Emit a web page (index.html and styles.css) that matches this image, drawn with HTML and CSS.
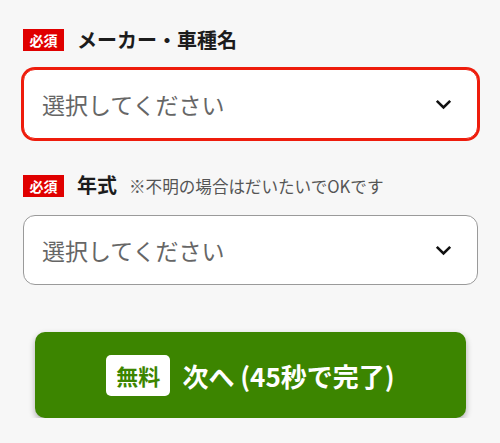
FILE: index.html
```html
<!DOCTYPE html>
<html lang="ja">
<head>
<meta charset="utf-8">
<link rel="stylesheet" href="styles.css">
</head>
<body>
<div class="form">
  <div class="field">
    <div class="field-label">
      <span class="req">必須</span>
      <span class="label-text">メーカー・車種名</span>
    </div>
    <div class="select is-error">
      <span class="placeholder">選択してください</span>
      <svg class="chevron" width="17" height="11" viewBox="0 0 17 11"><polyline points="1.8,1.8 8.5,8.5 15.2,1.8" fill="none" stroke="#111" stroke-width="2.6"/></svg>
    </div>
  </div>
  <div class="field field-second">
    <div class="field-label">
      <span class="req">必須</span>
      <span class="label-group"><span class="label-text">年式</span><span class="note">※不明の場合はだいたいでOKです</span></span>
    </div>
    <div class="select">
      <span class="placeholder">選択してください</span>
      <svg class="chevron" width="17" height="11" viewBox="0 0 17 11"><polyline points="1.8,1.8 8.5,8.5 15.2,1.8" fill="none" stroke="#111" stroke-width="2.6"/></svg>
    </div>
  </div>
  <button class="next-btn" type="button">
    <span class="free">無料</span>
    <span class="next-text">次へ (45秒で完了)</span>
  </button>
</div>
</body>
</html>
```

FILE: styles.css
```css
html, body {
  margin: 0;
  padding: 0;
  background: #f7f7f7;
}
body {
  font-family: "Noto Sans CJK JP", "Noto Sans", sans-serif;
  color: #222;
}
.form {
  padding: 29px 22px 0 23px;
  display: flex;
  flex-direction: column;
}
.field {
  display: flex;
  flex-direction: column;
  gap: 18px;
}
.field-second {
  margin-top: 36px;
}
.field-label {
  display: flex;
  align-items: center;
  gap: 13px;
  height: 22px;
}
.req {
  width: 41px;
  height: 22px;
  line-height: 22px;
  background: #e00000;
  color: #fff;
  font-size: 14px;
  font-weight: 700;
  text-align: center;
  flex: none;
}
.label-group {
  display: flex;
  align-items: baseline;
  gap: 12px;
}
.label-text {
  font-size: 20px;
  font-weight: 700;
  line-height: 22px;
  color: #1c1c1c;
}
.note {
  font-size: 16.6px;
  color: #555;
}
.select {
  box-sizing: border-box;
  height: 70px;
  border: 1px solid #9a9a9a;
  border-radius: 12px;
  background: #fff;
  display: flex;
  align-items: center;
  justify-content: space-between;
  padding: 0 25px 0 18px;
}
.select.is-error {
  border-color: #ee1c0c;
  box-shadow: 0 0 0 2px #ee1c0c;
}
.placeholder {
  font-size: 23px;
  color: #666;
}
.chevron {
  display: block;
}
.next-btn {
  margin: 47px 12px 0;
  height: 86px;
  border: none;
  border-radius: 10px;
  background: #3c8500;
  box-shadow: 0 3px 6px rgba(0, 0, 0, 0.3);
  display: flex;
  align-items: center;
  justify-content: center;
  gap: 12px;
  font-family: "Noto Sans CJK JP", "Noto Sans", sans-serif;
  padding: 0;
}
.free {
  width: 64px;
  height: 41px;
  line-height: 41px;
  background: #fff;
  border-radius: 5px;
  color: #3c8500;
  font-size: 22px;
  font-weight: 700;
  text-align: center;
}
.next-text {
  color: #fff;
  font-size: 26px;
  font-weight: 700;
}
```
